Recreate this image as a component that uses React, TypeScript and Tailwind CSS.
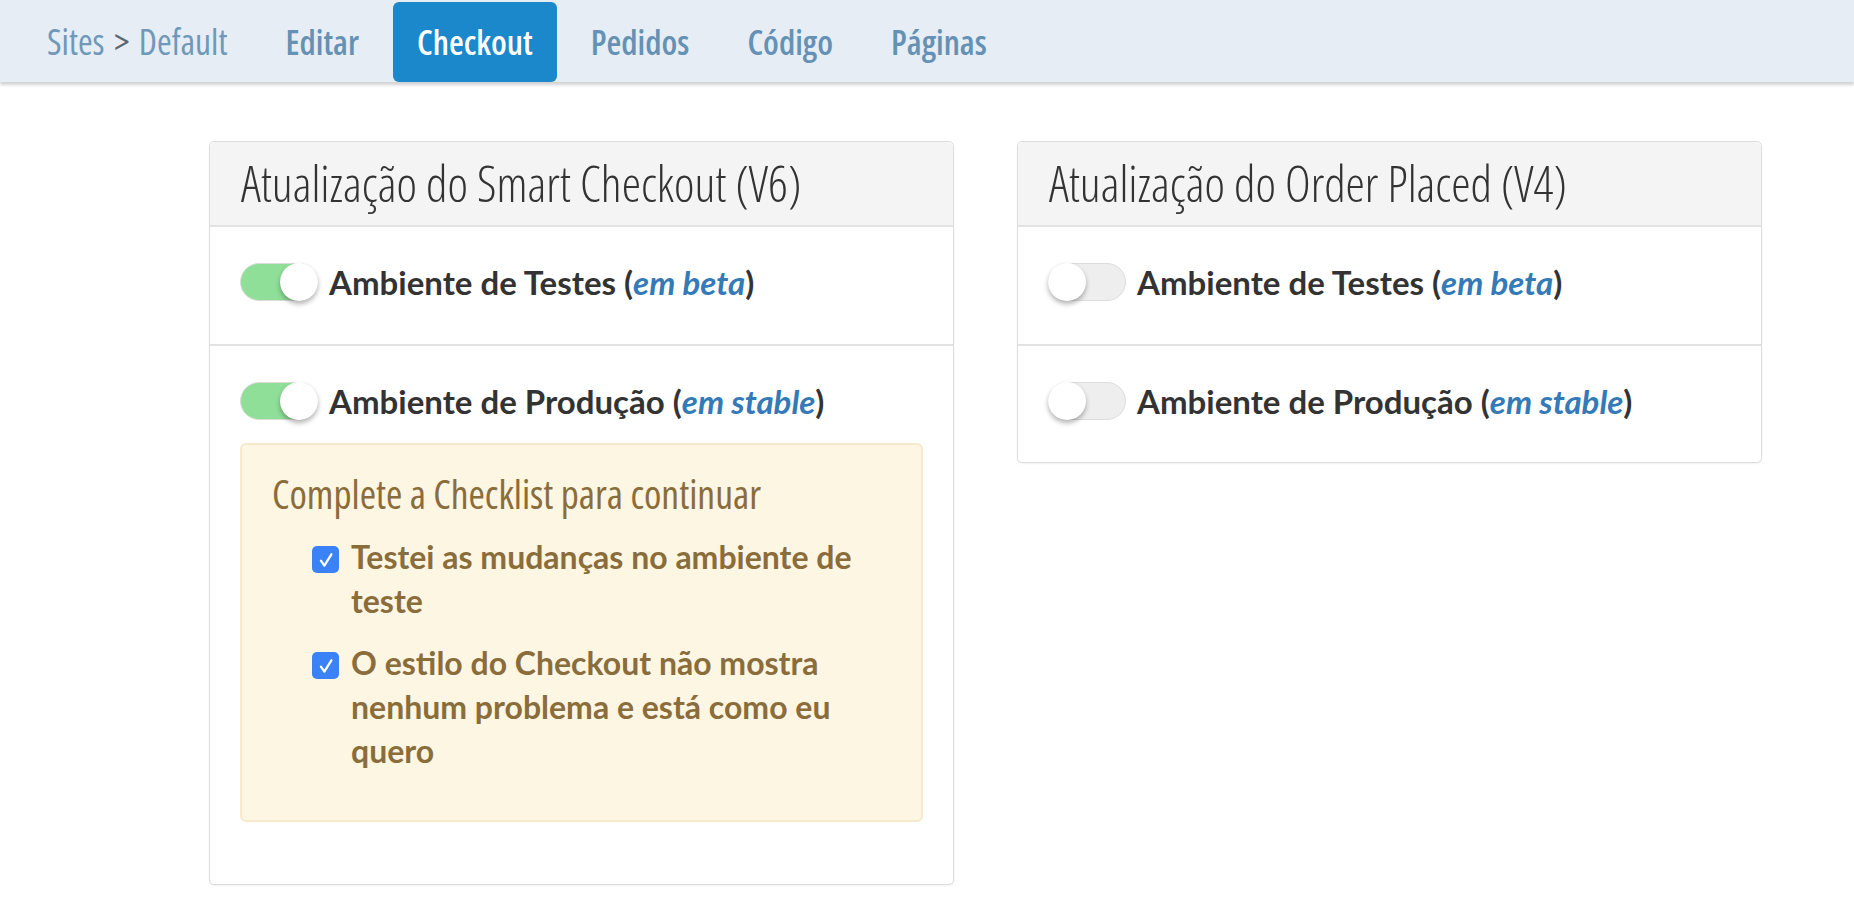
import { useState } from "react";

const condensed = "font-['Open_Sans',sans-serif] [font-stretch:75%]";
const lato = "font-['Lato','Liberation_Sans',sans-serif]";

function Toggle({ on }: { on: boolean }) {
  return (
    <div
      className={`relative h-[38px] w-[78px] shrink-0 rounded-full border ${
        on ? "border-[#d9dcd9] bg-[#8fdf98]" : "border-[#dddddd] bg-[#eeeeee]"
      }`}
    >
      <div
        className={`absolute top-[-1px] h-[38px] w-[38px] rounded-full bg-white shadow-[0_3px_5px_rgba(0,0,0,0.3)] ${
          on ? "right-[-1px]" : "left-[-1px]"
        }`}
      />
    </div>
  );
}

function ToggleLabel({ on, name, tag }: { on: boolean; name: string; tag: string }) {
  return (
    <div className="flex h-[38px] items-center gap-[11px]">
      <Toggle on={on} />
      <span className={`${lato} text-[33px] font-bold leading-none text-[#333333]`}>
        {name} (<em className="text-[#337ab7]">{tag}</em>)
      </span>
    </div>
  );
}

function Check({ children }: { children: React.ReactNode }) {
  const [checked, setChecked] = useState(true);
  return (
    <li className="flex gap-[12px]">
      <button
        type="button"
        onClick={() => setChecked(!checked)}
        className={`mt-[11px] flex h-[27px] w-[27px] shrink-0 items-center justify-center rounded-[5px] ${
          checked ? "bg-[#3b82f6]" : "border-2 border-[#767676] bg-white"
        }`}
      >
        {checked && (
          <svg width="24" height="24" viewBox="0 0 16 16" fill="none">
            <path d="M4.6 8.4l2.3 3.3L11.6 4.2" stroke="white" strokeWidth="1.5" strokeLinecap="round" strokeLinejoin="round" />
          </svg>
        )}
      </button>
      <span className={`${lato} text-[32px] font-bold leading-[44px] text-[#8a6d3b]`}>{children}</span>
    </li>
  );
}

function Panel({ title, children }: { title: string; children: React.ReactNode }) {
  return (
    <div className="w-[745px] rounded-[5px] border border-[#dddddd] bg-white shadow-[0_1px_2px_rgba(0,0,0,0.06)]">
      <div className="flex h-[85px] items-center rounded-t-[5px] border-b-2 border-[#e3e3e3] bg-[#f4f4f4] px-[31px]">
        <h2 className={`${condensed} text-[48.8px] font-light leading-none text-[#333333]`}>{title}</h2>
      </div>
      {children}
    </div>
  );
}

export default function App() {
  const tabs = ["Editar", "Checkout", "Pedidos", "Código", "Páginas"];
  const active = "Checkout";

  return (
    <div className="min-h-screen bg-white">
      <nav className="flex h-[82px] items-end bg-[#e6edf5] pl-[23px] shadow-[0_3px_3px_rgba(0,0,0,0.18)]">
        <div className={`${condensed} flex h-[80px] items-center gap-[10px] text-[34px]`}>
          <span className="px-[24px] text-[35.5px] text-[#7098b9]">
            Sites <span className="mx-[3px] text-[#5b6670]">&gt;</span> Default
          </span>
          {tabs.map((t) => (
            <a
              key={t}
              href="#"
              className={`flex h-[80px] items-center rounded-[6px] px-[24px] font-semibold ${
                t === active ? "bg-[#1a88ca] text-white" : "text-[#6591b4]"
              }`}
            >
              {t}
            </a>
          ))}
        </div>
      </nav>

      <main className="flex gap-[63px] pl-[209px] pt-[59px]">
        <Panel title="Atualização do Smart Checkout (V6)">
          <div className="border-b-2 border-[#e3e3e3] px-[30px] pb-[43px] pt-[36px]">
            <ToggleLabel on name="Ambiente de Testes" tag="em beta" />
          </div>
          <div className="px-[30px] pb-[62px] pt-[36px]">
            <ToggleLabel on name="Ambiente de Produção" tag="em stable" />
            <div className="mt-[23px] rounded-[6px] border-2 border-[#f7e9cc] bg-[#fcf6e3] pb-[47px] pl-[30px] pr-[16px] pt-[20px]">
              <h3 className={`${condensed} text-[39.5px] font-normal text-[#8a6d3b]`}>
                Complete a Checklist para continuar
              </h3>
              <ul className="mt-[11px] flex flex-col gap-[18px] pl-[40px]">
                <Check>Testei as mudanças no ambiente de teste</Check>
                <Check>O estilo do Checkout não mostra nenhum problema e está como eu quero</Check>
              </ul>
            </div>
          </div>
        </Panel>

        <div className="self-start">
          <Panel title="Atualização do Order Placed (V4)">
            <div className="border-b-2 border-[#e3e3e3] px-[30px] pb-[43px] pt-[36px]">
              <ToggleLabel on={false} name="Ambiente de Testes" tag="em beta" />
            </div>
            <div className="px-[30px] pb-[42px] pt-[36px]">
              <ToggleLabel on={false} name="Ambiente de Produção" tag="em stable" />
            </div>
          </Panel>
        </div>
      </main>
    </div>
  );
}
